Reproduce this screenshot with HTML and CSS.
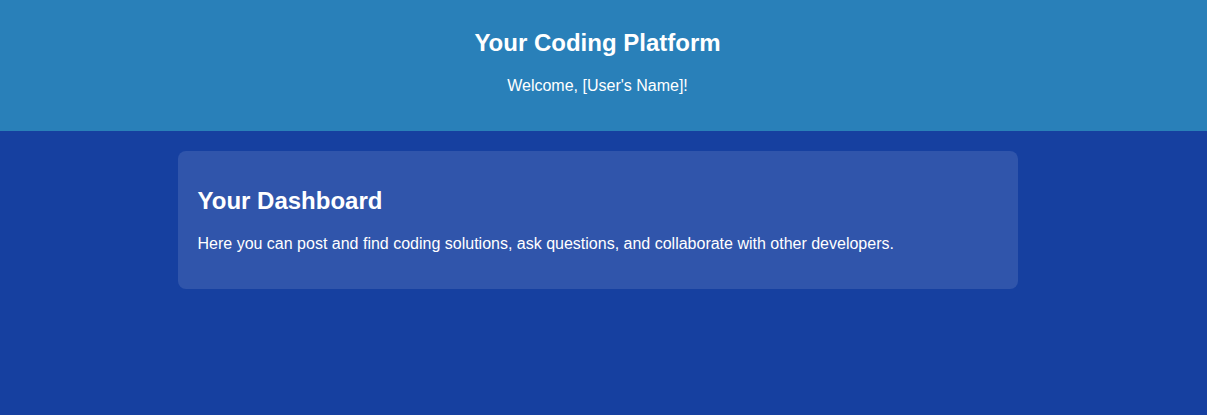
FILE: index.html
```html
<!DOCTYPE html>
<html lang="en">
<head>
<meta charset="utf-8">
<title>Your Coding Platform</title>
<link rel="stylesheet" href="styles.css">
</head>
<body>
<header class="site-header">
  <h1 class="site-title">Your Coding Platform</h1>
  <p class="welcome">Welcome, [User's Name]!</p>
</header>
<main class="content">
  <section class="card">
    <h2 class="card-title">Your Dashboard</h2>
    <p class="card-text">Here you can post and find coding solutions, ask questions, and collaborate with other developers.</p>
  </section>
</main>
</body>
</html>
```
FILE: styles.css
```css
html, body {
  margin: 0;
  padding: 0;
}
body {
  background: #1640a0;
  color: #ffffff;
  font-family: "Liberation Sans", Arial, sans-serif;
  min-height: 415px;
}
.site-header {
  background: #2980b9;
  text-align: center;
  padding: 29px 32px 20px 20px;
}
.site-title {
  margin: 0 0 20px;
  font-size: 24px;
  font-weight: bold;
}
.welcome {
  margin: 0 0 16px;
  font-size: 16px;
}
.content {
  padding: 20px 12px 0 0;
  display: flex;
  justify-content: center;
}
.card {
  width: 800px;
  padding: 36px 20px 36px;
  background: #3055ab;
  border-radius: 8px;
}
.card-title {
  margin: 0 0 20px;
  font-size: 24px;
  font-weight: bold;
}
.card-text {
  margin: 0;
  font-size: 16px;
}
```
